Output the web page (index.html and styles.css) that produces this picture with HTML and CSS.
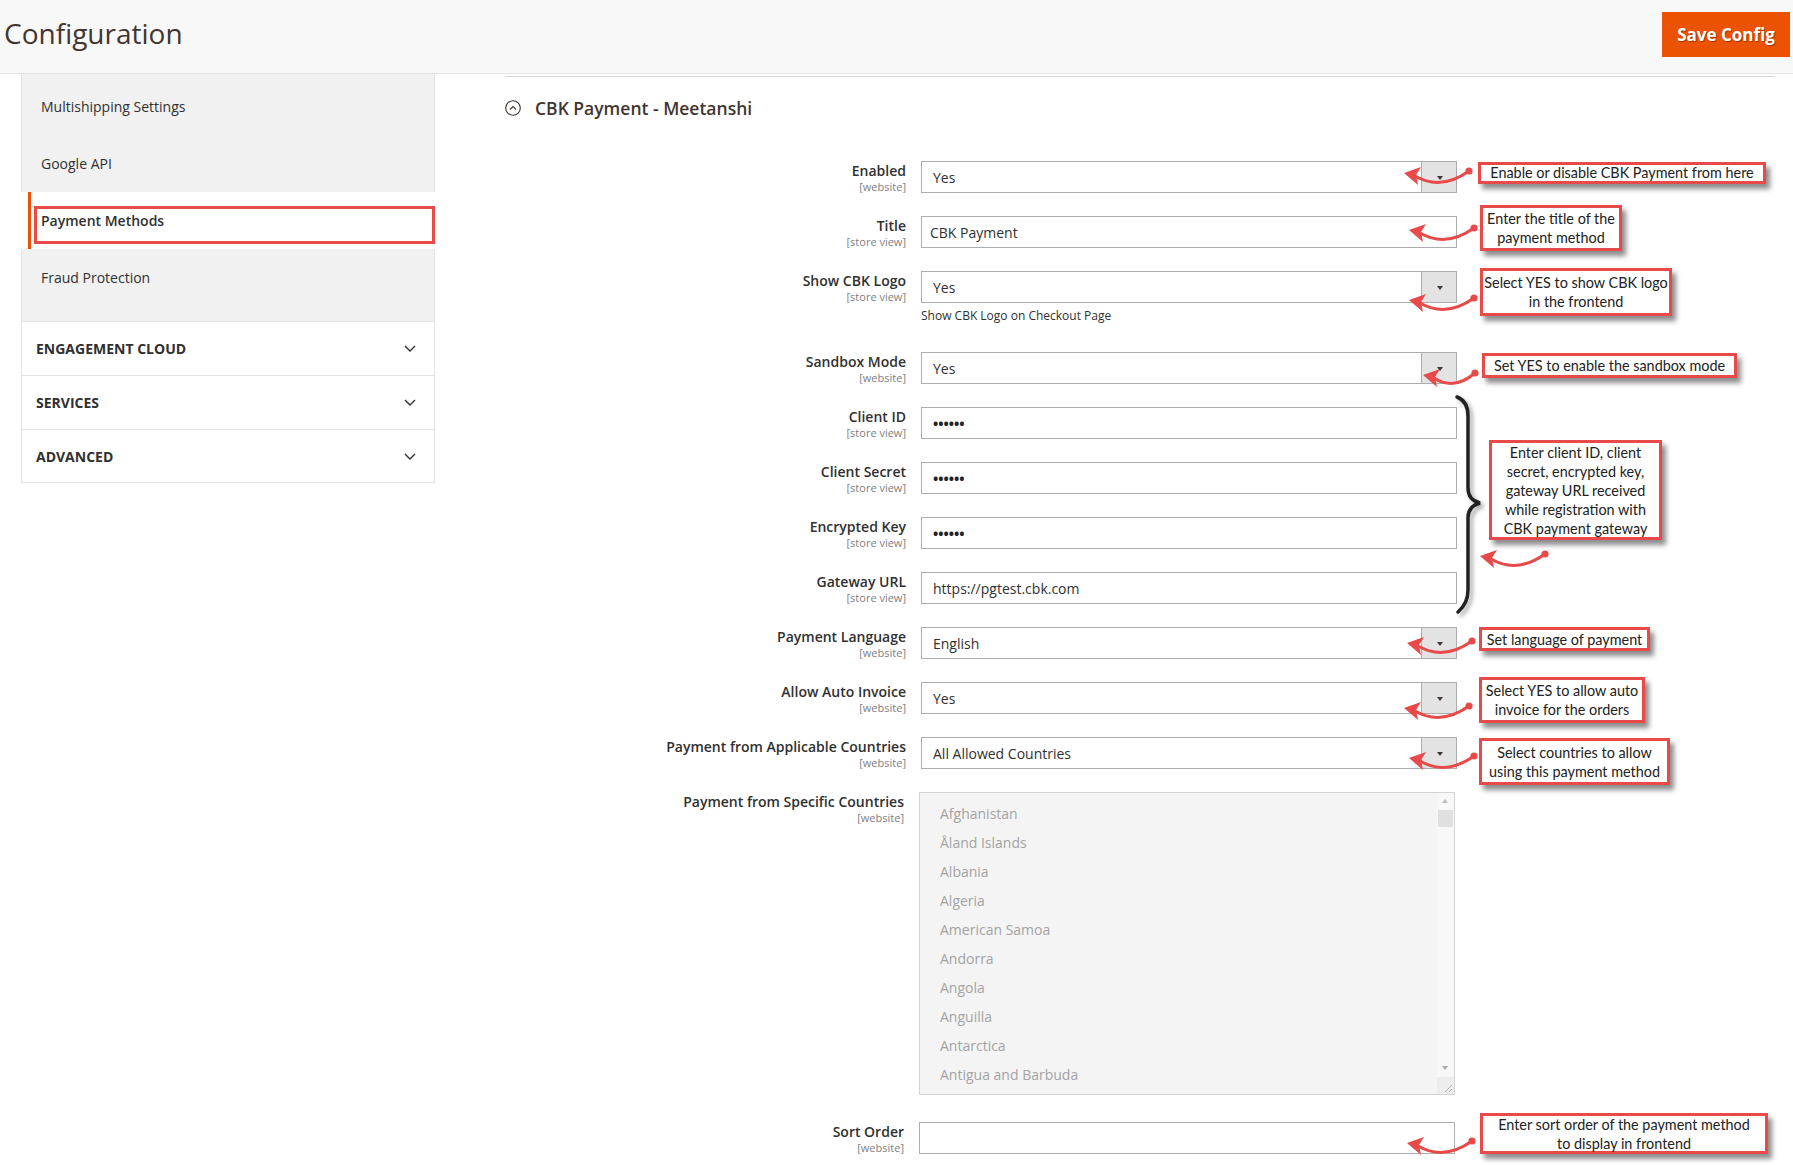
FILE: index.html
```html
<html>
  <head>
    <title>Configuration</title>
    <link rel="stylesheet" href="styles.css">
  </head>
  <body>
    <div class="page">
      <header class="page-header">
        <h1 class="page-title">Configuration</h1>
        <button class="save-button">Save Config</button>
      </header>

      <div class="page-columns">
        <aside class="side-nav">
          <ul class="nav-group">
            <li class="nav-item first">Multishipping Settings</li>
            <li class="nav-item">Google API</li>
            <li class="nav-item active">Payment Methods</li>
            <li class="nav-item last">Fraud Protection</li>
          </ul>
          <div class="nav-title">ENGAGEMENT CLOUD
            <svg class="chevron" width="12" height="7" viewBox="0 0 12 7"><path d="M1 1 L6 6 L11 1"/></svg>
          </div>
          <div class="nav-title">SERVICES
            <svg class="chevron" width="12" height="7" viewBox="0 0 12 7"><path d="M1 1 L6 6 L11 1"/></svg>
          </div>
          <div class="nav-title last">ADVANCED
            <svg class="chevron" width="12" height="7" viewBox="0 0 12 7"><path d="M1 1 L6 6 L11 1"/></svg>
          </div>
        </aside>

        <main class="content">
          <div class="section-title">
            <svg class="section-icon" width="16" height="16" viewBox="0 0 16 16">
              <circle cx="8" cy="8" r="7.3"/>
              <path d="M5 9.5 L8 6.5 L11 9.5"/>
            </svg>
            CBK Payment - Meetanshi
          </div>

          <div class="form">
            <div class="field">
              <div class="field-label">Enabled<span class="scope">[website]</span></div>
              <div class="field-control">
                <div class="select"><select class="input"><option>Yes</option></select></div>
              </div>
            </div>
            <div class="field">
              <div class="field-label">Title<span class="scope">[store view]</span></div>
              <div class="field-control">
                <input class="input title-input" type="text" value="CBK Payment">
              </div>
            </div>
            <div class="field">
              <div class="field-label">Show CBK Logo<span class="scope">[store view]</span></div>
              <div class="field-control">
                <div class="select"><select class="input"><option>Yes</option></select></div>
                <div class="field-note">Show CBK Logo on Checkout Page</div>
              </div>
            </div>
            <div class="field">
              <div class="field-label">Sandbox Mode<span class="scope">[website]</span></div>
              <div class="field-control">
                <div class="select"><select class="input"><option>Yes</option></select></div>
              </div>
            </div>
            <div class="field">
              <div class="field-label">Client ID<span class="scope">[store view]</span></div>
              <div class="field-control">
                <input class="input secret" type="text" value="••••••">
              </div>
            </div>
            <div class="field">
              <div class="field-label">Client Secret<span class="scope">[store view]</span></div>
              <div class="field-control">
                <input class="input secret" type="text" value="••••••">
              </div>
            </div>
            <div class="field">
              <div class="field-label">Encrypted Key<span class="scope">[store view]</span></div>
              <div class="field-control">
                <input class="input secret" type="text" value="••••••">
              </div>
            </div>
            <div class="field">
              <div class="field-label">Gateway URL<span class="scope">[store view]</span></div>
              <div class="field-control">
                <input class="input" type="text" value="https://pgtest.cbk.com">
              </div>
            </div>
            <div class="field">
              <div class="field-label">Payment Language<span class="scope">[website]</span></div>
              <div class="field-control">
                <div class="select"><select class="input"><option>English</option></select></div>
              </div>
            </div>
            <div class="field">
              <div class="field-label">Allow Auto Invoice<span class="scope">[website]</span></div>
              <div class="field-control">
                <div class="select"><select class="input"><option>Yes</option></select></div>
              </div>
            </div>
            <div class="field">
              <div class="field-label">Payment from Applicable Countries<span class="scope">[website]</span></div>
              <div class="field-control">
                <div class="select"><select class="input"><option>All Allowed Countries</option></select></div>
              </div>
            </div>
            <div class="field shift tall">
              <div class="field-label">Payment from Specific Countries<span class="scope">[website]</span></div>
              <div class="field-control">
                <div class="multiselect">
                  <ul class="options">
                    <li>Afghanistan</li>
                    <li>Åland Islands</li>
                    <li>Albania</li>
                    <li>Algeria</li>
                    <li>American Samoa</li>
                    <li>Andorra</li>
                    <li>Angola</li>
                    <li>Anguilla</li>
                    <li>Antarctica</li>
                    <li>Antigua and Barbuda</li>
                  </ul>
                  <div class="scrollbar">
                    <div class="scroll-btn up"></div>
                    <div class="scroll-thumb"></div>
                    <div class="scroll-track"></div>
                    <div class="scroll-btn down"></div>
                    <div class="scroll-grip">
                      <svg width="17" height="17" viewBox="0 0 17 17"><path d="M15 8 L8 15 M15 12 L12 15"/></svg>
                    </div>
                  </div>
                </div>
              </div>
            </div>
            <div class="field shift">
              <div class="field-label">Sort Order<span class="scope">[website]</span></div>
              <div class="field-control">
                <input class="input" type="text" value="">
              </div>
            </div>
          </div>
        </main>
      </div>

      <!-- annotation layer drawn over the screenshot -->
      <div class="callout c-enabled">Enable or disable CBK Payment from here</div>
      <div class="callout c-title">Enter the title of the<br>payment method</div>
      <div class="callout c-logo">Select YES to show CBK logo<br>in the frontend</div>
      <div class="callout c-sandbox">Set YES to enable the sandbox mode</div>
      <div class="callout c-keys">Enter client ID, client<br>secret, encrypted key,<br>gateway URL received<br>while registration with<br>CBK payment gateway</div>
      <div class="callout c-language">Set language of payment</div>
      <div class="callout c-invoice">Select YES to allow auto<br>invoice for the orders</div>
      <div class="callout c-countries">Select countries to allow<br>using this payment method</div>
      <div class="callout c-sort">Enter sort order of the payment method<br>to display in frontend</div>

      <svg class="arrow a-enabled" viewBox="0 0 72 24"><path d="M12 11 Q38 26 66 6"/><circle cx="66" cy="6" r="3.6"/><polygon points="1,8 18,2 13,10 15,20"/></svg>
      <svg class="arrow a-title" viewBox="0 0 72 24"><path d="M12 11 Q38 26 66 6"/><circle cx="66" cy="6" r="3.6"/><polygon points="1,8 18,2 13,10 15,20"/></svg>
      <svg class="arrow a-logo" viewBox="0 0 72 24"><path d="M12 11 Q38 26 66 6"/><circle cx="66" cy="6" r="3.6"/><polygon points="1,8 18,2 13,10 15,20"/></svg>
      <svg class="arrow short a-sandbox" viewBox="0 0 58 24"><path d="M12 11 Q32 24 53 6"/><circle cx="53" cy="6" r="3.6"/><polygon points="1,8 18,2 13,10 15,20"/></svg>
      <svg class="arrow a-keys" viewBox="0 0 72 24"><path d="M12 11 Q38 26 66 6"/><circle cx="66" cy="6" r="3.6"/><polygon points="1,8 18,2 13,10 15,20"/></svg>
      <svg class="arrow a-language" viewBox="0 0 72 24"><path d="M12 11 Q38 26 66 6"/><circle cx="66" cy="6" r="3.6"/><polygon points="1,8 18,2 13,10 15,20"/></svg>
      <svg class="arrow a-invoice" viewBox="0 0 72 24"><path d="M12 11 Q38 26 66 6"/><circle cx="66" cy="6" r="3.6"/><polygon points="1,8 18,2 13,10 15,20"/></svg>
      <svg class="arrow a-countries" viewBox="0 0 72 24"><path d="M12 11 Q38 26 66 6"/><circle cx="66" cy="6" r="3.6"/><polygon points="1,8 18,2 13,10 15,20"/></svg>
      <svg class="arrow a-sort" viewBox="0 0 72 24"><path d="M12 11 Q38 26 66 6"/><circle cx="66" cy="6" r="3.6"/><polygon points="1,8 18,2 13,10 15,20"/></svg>

      <svg class="brace" viewBox="0 0 34 228">
        <path d="M5 5 C13 8 16 14 16 24 L16 96 C16 104 20 109 28 111 C20 113 16 118 16 126 L16 198 C16 208 13 214 6 220"/>
      </svg>
    </div>
  </body>
</html>
```

FILE: styles.css
```css
* {
  box-sizing: border-box;
}
body {
  margin: 0;
  font-family: "Open Sans", "Noto Sans", sans-serif;
  color: #303030;
  background: #ffffff;
}
.page {
  position: relative;
  width: 1793px;
  height: 1165px;
  overflow: hidden;
}

/* header */
.page-header {
  display: flex;
  justify-content: space-between;
  align-items: flex-start;
  height: 74px;
  padding: 0 3px 0 4px;
  background: #f8f8f8;
  border-bottom: 1px solid #e3e3e3;
}
.page-title {
  margin: 17px 0 0;
  font-size: 28px;
  font-weight: 400;
  line-height: 1.2;
  color: #41362f;
}
.save-button {
  margin-top: 12px;
  width: 128px;
  height: 45px;
  padding: 0;
  border: none;
  background: #eb5202;
  color: #ffffff;
  font-family: "Open Sans", sans-serif;
  font-size: 17px;
  font-weight: 700;
  text-shadow: 1px 1px 1px rgba(0, 0, 0, 0.35);
}

.page-columns {
  display: flex;
  align-items: flex-start;
  padding-left: 21px;
}

/* left side menu */
.side-nav {
  width: 414px;
  flex: none;
}
.nav-group {
  list-style: none;
  margin: 0;
  padding: 0;
}
.nav-item {
  display: flex;
  align-items: center;
  height: 57px;
  padding-left: 19px;
  background: #f1f1f1;
  border-left: 1px solid #e3e3e3;
  border-right: 1px solid #e3e3e3;
  font-size: 14px;
}
.nav-item.first {
  height: 61px;
  padding-top: 4px;
}
.nav-item.last {
  height: 72px;
  padding-bottom: 15px;
}
.nav-item.active {
  position: relative;
  margin-left: 7px;
  padding-left: 10px;
  border-left: 3px solid #eb5202;
  border-right: none;
  background: #ffffff;
  font-weight: 600;
}
.nav-item.active::after {
  content: "";
  position: absolute;
  left: 3px;
  right: 0;
  top: 14px;
  height: 32px;
  border: 3px solid #e84a4a;
}
.nav-title {
  display: flex;
  justify-content: space-between;
  align-items: center;
  height: 54px;
  padding: 0 18px 0 14px;
  border: 1px solid #e3e3e3;
  border-bottom: none;
  font-size: 14px;
  font-weight: 700;
}
.nav-title.last {
  border-bottom: 1px solid #e3e3e3;
}
.chevron path {
  fill: none;
  stroke: #303030;
  stroke-width: 1.4;
}

/* main column */
.content {
  width: 1270px;
  margin: 2px 0 0 70px;
  border-top: 1px solid #d6d6d6;
}
.section-title {
  display: flex;
  align-items: center;
  gap: 14px;
  margin: 21px 0 43px;
  font-size: 17.5px;
  font-weight: 600;
  line-height: 20px;
  color: #41362f;
}
.section-icon circle,
.section-icon path {
  fill: none;
  stroke: #41362f;
  stroke-width: 1.1;
}

.field {
  display: flex;
  align-items: flex-start;
  margin-bottom: 23px;
}
.field.shift {
  margin-left: -2px;
}
.field.tall {
  margin-bottom: 27px;
}
.field-label {
  width: 401px;
  padding-top: 1px;
  text-align: right;
  font-size: 14px;
  font-weight: 600;
  line-height: 18px;
  color: #303030;
}
.scope {
  display: block;
  font-size: 11px;
  font-weight: 400;
  line-height: 13px;
  color: #808080;
}
.field-control {
  width: 536px;
  margin-left: 15px;
}
.input {
  display: block;
  width: 100%;
  height: 32px;
  margin: 0;
  padding: 0 11px;
  border: 1px solid #adadad;
  border-radius: 0;
  background: #ffffff;
  font-family: "Open Sans", sans-serif;
  font-size: 14px;
  color: #303030;
  outline: none;
  -webkit-appearance: none;
  appearance: none;
}
.title-input {
  padding-left: 8px;
}
.secret {
  font-weight: 700;
  color: #222222;
}
.select {
  position: relative;
}
.select::after {
  content: "";
  position: absolute;
  top: 0;
  right: 0;
  bottom: 0;
  width: 34px;
  border: 1px solid #adadad;
  background: #e3e3e3;
}
.select::before {
  content: "";
  position: absolute;
  z-index: 1;
  top: 15px;
  right: 14px;
  border-left: 3.5px solid transparent;
  border-right: 3.5px solid transparent;
  border-top: 4px solid #41362f;
}
.field-note {
  margin: 4px 0;
  font-size: 12px;
  line-height: 18px;
}

/* disabled multiselect */
.multiselect {
  display: flex;
  height: 303px;
  border: 1px solid #d4d4d4;
  background: #f4f4f4;
}
.options {
  flex: 1;
  list-style: none;
  margin: 0;
  padding: 6px 0 0 20px;
  font-size: 14px;
  line-height: 29px;
  color: #a3a3a3;
}
.scrollbar {
  display: flex;
  flex-direction: column;
  width: 17px;
  background: #f8f8f8;
}
.scroll-btn {
  position: relative;
  height: 17px;
}
.scroll-btn::after {
  content: "";
  position: absolute;
  left: 5px;
  top: 6px;
  border-left: 3.5px solid transparent;
  border-right: 3.5px solid transparent;
}
.scroll-btn.up::after {
  border-bottom: 4px solid #bcbcbc;
}
.scroll-btn.down::after {
  border-top: 4px solid #a8a8a8;
}
.scroll-thumb {
  height: 17px;
  margin: 0 1px;
  background: #e0e0e0;
}
.scroll-track {
  flex: 1;
}
.scroll-grip {
  height: 17px;
  background: #ededed;
}
.scroll-grip path {
  stroke: #b5b5b5;
  stroke-width: 1;
}

/* annotations over the page */
.callout {
  position: absolute;
  display: flex;
  align-items: center;
  justify-content: center;
  text-align: center;
  border: 3px solid #e84a4a;
  background: #ffffff;
  box-shadow: 4px 5px 5px rgba(0, 0, 0, 0.45);
  font-family: Lato, "Liberation Sans", sans-serif;
  font-size: 14.4px;
  line-height: 19px;
  color: #222222;
}
.c-enabled { left: 1478px; top: 162px; width: 288px; height: 22px; line-height: 16px; }
.c-title { left: 1480px; top: 205px; width: 142px; height: 46px; }
.c-logo { left: 1480px; top: 268px; width: 192px; height: 48px; }
.c-sandbox { left: 1482px; top: 353px; width: 255px; height: 25px; }
.c-keys { left: 1489px; top: 440px; width: 173px; height: 100px; }
.c-language { left: 1479px; top: 627px; width: 171px; height: 24px; }
.c-invoice { left: 1479px; top: 677px; width: 166px; height: 46px; }
.c-countries { left: 1479px; top: 738px; width: 191px; height: 47px; }
.c-sort { left: 1480px; top: 1113px; width: 288px; height: 41px; }

.arrow {
  position: absolute;
  width: 72px;
  height: 24px;
  overflow: visible;
}
.arrow.short {
  width: 58px;
}
.arrow path {
  fill: none;
  stroke: #e84a4a;
  stroke-width: 3;
  stroke-linecap: round;
}
.arrow circle,
.arrow polygon {
  fill: #e84a4a;
}
.a-enabled { left: 1403px; top: 165px; }
.a-title { left: 1408px; top: 222px; }
.a-logo { left: 1408px; top: 292px; }
.a-sandbox { left: 1422px; top: 367px; }
.a-keys { left: 1479px; top: 548px; }
.a-language { left: 1406px; top: 635px; }
.a-invoice { left: 1403px; top: 700px; }
.a-countries { left: 1408px; top: 750px; }
.a-sort { left: 1406px; top: 1135px; }

.brace {
  position: absolute;
  left: 1452px;
  top: 392px;
  width: 34px;
  height: 228px;
  overflow: visible;
  filter: drop-shadow(3px 3px 2px rgba(0, 0, 0, 0.35));
}
.brace path {
  fill: none;
  stroke: #222222;
  stroke-width: 3.5;
  stroke-linecap: round;
}
```
